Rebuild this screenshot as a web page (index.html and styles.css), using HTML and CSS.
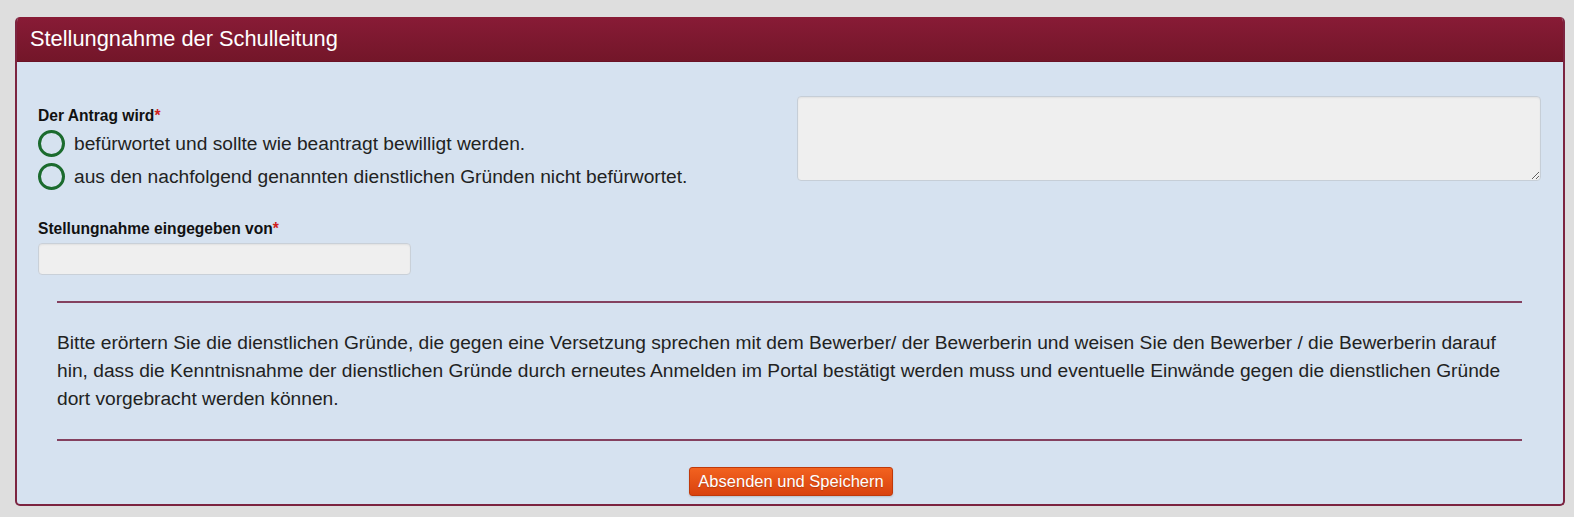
FILE: index.html
```html
<!DOCTYPE html>
<html lang="de">
<head>
    <meta charset="UTF-8">
    <title>Stellungnahme der Schulleitung</title>
    <link rel="stylesheet" href="styles.css">
</head>
<body>
    <div class="panel">
        <div class="panel-head">Stellungnahme der Schulleitung</div>
        <div class="panel-body">
            <div class="top-row">
                <div class="left-col">
                    <div class="label">Der Antrag wird<span class="req">*</span></div>
                    <label class="radio-row"><span class="radio"></span>befürwortet und sollte wie beantragt bewilligt werden.</label>
                    <label class="radio-row"><span class="radio"></span>aus den nachfolgend genannten dienstlichen Gründen nicht befürwortet.</label>
                    <div class="label label2">Stellungnahme eingegeben von<span class="req">*</span></div>
                    <input class="text-input" type="text">
                </div>
                <textarea class="comment"></textarea>
            </div>

            <div class="notice">
                Bitte erörtern Sie die dienstlichen Gründe, die gegen eine Versetzung sprechen mit dem Bewerber/ der Bewerberin und weisen Sie den Bewerber / die Bewerberin darauf hin, dass die Kenntnisnahme der dienstlichen Gründe durch erneutes Anmelden im Portal bestätigt werden muss und eventuelle Einwände gegen die dienstlichen Gründe dort vorgebracht werden können.
            </div>

            <div class="actions">
                <button class="btn-submit">Absenden und Speichern</button>
            </div>
        </div>
    </div>
</body>
</html>
```

FILE: styles.css
```css
body {
    margin: 0;
    padding: 17px 9px 0 15px;
    background-color: #dedede;
    font-family: "Liberation Sans", Arial, sans-serif;
    color: #222;
}

.panel {
    border: 2px solid #7c2440;
    border-top: none;
    border-radius: 5px;
    background-color: #d6e2f0;
    overflow: hidden;
}

.panel-head {
    height: 44px;
    line-height: 43px;
    font-size: 21.8px;
    color: #ffffff;
    background: linear-gradient(#881b36, #731629);
    border-bottom: 1px solid #6a1226;
    margin: 0 -2px;
    padding-left: 15px;
}

.panel-body {
    padding: 34px 22px 8px 21px;
}

.top-row {
    display: flex;
    justify-content: space-between;
}

.left-col {
    padding-top: 11px;
}

.label {
    font-weight: bold;
    font-size: 15.6px;
    line-height: 18px;
    color: #111;
}

.req {
    color: #d0201c;
}

.radio-row {
    display: flex;
    align-items: center;
    height: 33px;
    font-size: 19.2px;
    color: #222;
}

.radio-row:first-of-type {
    margin-top: 2px;
}

.radio {
    width: 21px;
    height: 21px;
    border: 3.5px solid #1b6b2e;
    border-radius: 50%;
    margin-right: 9px;
    box-sizing: content-box;
}

.label2 {
    margin-top: 27px;
}

.text-input {
    display: block;
    margin-top: 5px;
    width: 373px;
    height: 32px;
    box-sizing: border-box;
    border: 1px solid #c9d0d8;
    border-radius: 4px;
    background-color: #efefef;
    box-shadow: inset 0 1px 2px rgba(0, 0, 0, 0.06);
}

.comment {
    width: 744px;
    height: 85px;
    box-sizing: border-box;
    border: 1px solid #c6ced7;
    border-radius: 4px;
    background-color: #efefef;
    box-shadow: inset 0 1px 2px rgba(0, 0, 0, 0.06);
    margin: 0;
}

.notice {
    margin: 26px 19px 0 19px;
    border-top: 2px solid #84415f;
    border-bottom: 2px solid #84415f;
    padding: 26px 0 26px 0;
    font-size: 19.2px;
    line-height: 28px;
    color: #222;
}

.actions {
    text-align: center;
    padding-top: 26px;
}

.btn-submit {
    font-family: "Liberation Sans", Arial, sans-serif;
    font-size: 16.5px;
    color: #ffffff;
    background: linear-gradient(#f2621f, #d9420e);
    border: 1px solid #c0390a;
    border-radius: 3px;
    height: 29px;
    padding: 0 8px;
    margin-left: 3px;
    text-shadow: 0 1px 1px rgba(0, 0, 0, 0.2);
    box-shadow: 0 1px 2px rgba(0, 0, 0, 0.15);
}
```
